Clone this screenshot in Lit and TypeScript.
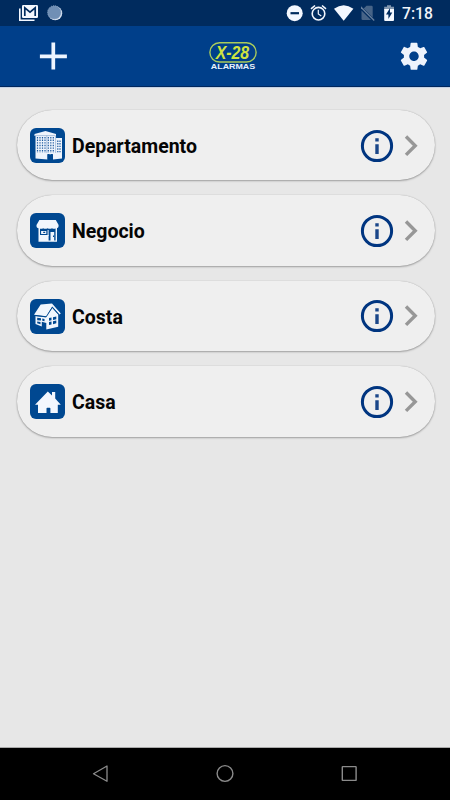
import { LitElement, html, svg, css } from "lit";
import { customElement } from "lit/decorators.js";

const white = "#f4f8ff";

// Pictures for the 35x35 place badges
const pictures: Record<string, unknown> = {
  Departamento: svg`
    <path fill="#eef4fc" d="M4.5 6L15.5 3L26 6V10H32V30.5L23 31.5V26.5H17.5V31.5L5.5 30.5V8H4.5Z"/>
    <path stroke="#1d5a9f" stroke-width="1.2" stroke-dasharray="1.4 1.2" d="M7.5 9V24.7M10 9V24.7M12.5 9V24.7M15 9V24.7M18.3 9V24.7M20.8 9V24.7M23.3 9V24.7M27.8 12.5V24.7M30 12.5V24.7"/>
    <path stroke="#7f9fc8" stroke-width=".6" d="M16.8 7.5V25M25.6 8V25M5 7.6H25.5"/>
    <path fill="#004891" d="M17.5 26H19.6V31.7H17.5ZM20.6 26H22.8V31.7H20.6Z"/>`,
  Negocio: svg`
    <path fill="#f1f6fd" d="M9.4 7H25.8L28.6 12Q28.8 15.2 26.2 15.2Q24 16.2 22 15.2Q19.8 16.3 17.6 15.2Q15.2 16.3 13.2 15.2Q11 16.3 9 15.2Q6.2 15.2 6.5 12Z"/>
    <path fill="#f1f6fd" d="M8.5 14.5H10V28.8H8.5ZM25.6 14.5H27V28.8H25.6ZM8.5 22H18.6V28.8H8.5ZM8.5 27.6H27V28.8H8.5ZM20.5 19H24.2V28H20.5Z"/>
    <path fill="#f1f6fd" d="M11.1 18H16.3V21H11.1ZM17.6 17H18.6V23H17.6Z"/>
    <path fill="#004891" d="M13.2 18.8H15.2V20H13.2ZM23 22.5H24V24H23Z"/>`,
  Costa: svg`
    <path fill="#f1f6fd" d="M4 15.8L10.7 5.5L22 4.6L30.8 14.5L29.4 15.5L22.3 7.4L16.3 17.2Z"/>
    <path fill="#f1f6fd" d="M5.5 17L15.6 18.3L22.3 9L28.2 15.6V27.7L16.3 30.5V24L11.8 22.8V27.5L5.5 25Z"/>
    <path stroke="#004891" stroke-width=".9" fill="none" d="M5.5 16.6L16.2 17.9L22.3 8.3L28.6 15.3"/>
    <path fill="#004891" d="M7.2 18.8L11 19.3V21.6L7.2 21.2ZM7.2 22.4L10.5 22.9V25.2L7.2 24.3ZM12.3 19.6L14.5 20V22.2L12.3 21.8ZM19 19L21.5 18.5V21.2L19 21.7ZM19 23L21.5 22.6V25.4L19 26ZM23 18.2L26.3 17.5V20.2L23 20.9ZM23 22.3L26.3 21.5V24.3L23 25.2Z"/>`,
  Casa: svg`<path fill="#f3f7fe" d="M17.8 7.6L22 11.6V8H25.2V14.6L30.8 20.7H27.8V29H20.4V24.5Q20.4 23.8 19.7 23.8H17.2Q16.5 23.8 16.5 24.5V29H8V20.7H5Z"/>`,
};

@customElement("place-row")
class PlaceRow extends LitElement {
  static properties = { name: { type: String } };
  declare name: string;

  static styles = css`
    :host { display: block; }
    .row {
      box-sizing: border-box; height: 70.6px; border-radius: 35px;
      background: #efefef; display: flex; align-items: center;
      padding: 1px 17px 0 13px;
      box-shadow: 0 1px 2px rgba(0,0,0,.3), 0 0 1px rgba(0,0,0,.26);
    }
    .badge { width: 35px; height: 35px; flex: none; display: block; }
    .name {
      flex: 1; margin-left: 7px; color: #050505; padding-top: 3px;
      font: 700 19.5px/24px Roboto, "Liberation Sans", sans-serif;
    }
    .info { width: 34px; height: 34px; display: block; }
    .arrow { width: 14px; height: 24px; display: block; margin-left: 10px; }
  `;

  render() {
    return html`<div class="row">
      <svg class="badge" viewBox="0 0 35 35" fill="none">
        <rect width="35" height="35" rx="6" fill="#004891"/>
        ${pictures[this.name]}
      </svg>
      <span class="name">${this.name}</span>
      <svg class="info" viewBox="0 0 34 34">
        <circle cx="17" cy="17" r="14.6" fill="none" stroke="#003580" stroke-width="3"/>
        <path fill="#1a4689" d="M15.3 9.3H18.7V12.4H15.3ZM15.3 15.2H18.7V25H15.3Z"/>
      </svg>
      <svg class="arrow" viewBox="0 0 14 24">
        <path fill="none" stroke="#979797" stroke-width="3.4" d="M2 2.5L11.2 11.7L2 20.9"/>
      </svg>
    </div>`;
  }
}

@customElement("app-root")
class AppRoot extends LitElement {
  static styles = css`
    :host {
      display: flex; flex-direction: column; width: 450px; height: 800px;
      background: #e7e7e7; overflow: hidden;
      font-family: Roboto, "Liberation Sans", sans-serif;
    }
    svg { display: block; flex: none; }
    .status {
      height: 26px; flex: none; background: #002b5e; display: flex;
      align-items: center; padding: 0 17px 0 18px; box-sizing: border-box;
    }
    .notices { display: flex; gap: 8px; flex: 1; }
    .system { display: flex; align-items: center; gap: 7px; }
    .clock { color: #f2f5fa; font-size: 15.7px; font-weight: 500; line-height: 26px; padding-top: 2px; width: 31px; white-space: nowrap; }
    .bar {
      height: 61px; flex: none; box-sizing: border-box; background: #003f8a;
      border-bottom: 1px solid #00275d; box-shadow: 0 1px 0 #c5d2e5;
      display: grid; grid-template-columns: 28px 1fr 28px; align-items: center;
      padding: 0 22px 0 39px;
    }
    .logo { justify-self: center; margin: 1px 1.5px 0 0; }
    .list {
      flex: 1; display: flex; flex-direction: column; gap: 14.8px;
      padding: 22.8px 15px 0 17px;
    }
    .nav {
      height: 52px; flex: none; background: #000; display: flex;
      justify-content: space-between; align-items: center;
      padding: 0 91px; box-shadow: 0 -1px 0 #a9a9a9;
    }
    .mark { font: italic 700 17.5px "Liberation Sans", sans-serif; }
    .word { font: 700 7px "Liberation Sans", sans-serif; }
  `;

  render() {
    return html`
      <div class="status">
        <div class="notices">
          <svg width="21" height="18" viewBox="18 4 21 18" fill="none">
            <path stroke="${white}" stroke-width="1.6" d="M19.8 8.5V20.2H34.5"/>
            <rect x="22" y="5" width="16" height="13" rx="1.2" fill="${white}"/>
            <path stroke="#002b5e" stroke-width="1.7" d="M24.8 16V7.8L30 12.2L35.2 7.8V16"/>
          </svg>
          <svg width="16" height="18" viewBox="47 4 16 18">
            <circle cx="55.2" cy="13.2" r="7" fill="#dce6f3"/>
            <circle cx="54.3" cy="12.4" r="6.7" fill="#708fb5" stroke="#8da6c5" stroke-dasharray="1 1"/>
          </svg>
        </div>
        <div class="system">
          <svg width="17" height="18" viewBox="286 4 17 18">
            <circle cx="294.7" cy="13.2" r="8" fill="${white}"/>
            <path fill="#002b5e" d="M290.5 12.1H299V14.3H290.5Z"/>
          </svg>
          <svg width="17" height="18" viewBox="310 4 17 18" fill="none" stroke="${white}">
            <circle cx="318.5" cy="13.7" r="6.3" stroke-width="1.6"/>
            <path stroke-width="1.6" d="M311 8.8L315 5.5M322 5.5L326 8.8"/>
            <path stroke-width="1.2" d="M318.3 9.8V14L321.3 16"/>
          </svg>
          <svg width="20" height="18" viewBox="334 4 20 18">
            <path fill="${white}" d="M334 8.7Q343.7 1.6 353.4 8.7L343.7 20.7Z"/>
          </svg>
          <svg width="16" height="18" viewBox="361.5 4 16 18">
            <path fill="#476487" d="M367 5.7H372Q373.2 5.7 373.2 7V17.5L364.2 8.5ZM362 10.4L371.5 20H363.3Q362 20 362 18.7Z"/>
            <path stroke="#68809e" stroke-width="1.3" d="M361 6.7L374.7 20.5"/>
          </svg>
          <svg width="11" height="18" viewBox="384 4 11 18">
            <path fill="#8297af" d="M387 5.2H391V6.8H394V10H384.2V6.8H387Z"/>
            <path fill="${white}" d="M384.2 9H394V20Q394 21 393 21H385.2Q384.2 21 384.2 20Z"/>
            <path fill="#002b5e" d="M390 8L386 14.4H388.4V19L392.3 12.5H390Z"/>
          </svg>
          <span class="clock">7:18</span>
        </div>
      </div>
      <div class="bar">
        <svg width="28" height="28" viewBox="0 0 28 28">
          <path stroke="#eef5ff" stroke-width="3.7" d="M14.3 .6V27.6M.9 14.4H27.9"/>
        </svg>
        <svg class="logo" width="50" height="32" viewBox="208 42 50 32">
          <rect x="209.9" y="43.7" width="46.2" height="19.3" rx="9.6" fill="none" stroke="#a9cc5c" stroke-width="1.4"/>
          <text class="mark" x="215.7" y="59.6" textLength="33.5" lengthAdjust="spacingAndGlyphs" fill="#cfe340">X-28</text>
          <text class="word" x="210.8" y="70.3" textLength="44.4" lengthAdjust="spacingAndGlyphs" fill="#e9f2fc">ALARMAS</text>
        </svg>
        <svg width="28" height="28" viewBox="0 0 28 28">
          <g transform="translate(-2.2 -1.9) scale(1.35)">
            <path fill="#eef3fc" d="M19.43 12.98c.04-.32.07-.64.07-.98s-.03-.66-.07-.98l2.11-1.65c.19-.15.24-.42.12-.64l-2-3.46c-.12-.22-.39-.3-.61-.22l-2.49 1c-.52-.4-1.08-.73-1.69-.98l-.38-2.65C14.46 2.18 14.25 2 14 2h-4c-.25 0-.46.18-.49.42l-.38 2.65c-.61.25-1.17.59-1.69.98l-2.49-1c-.23-.09-.49 0-.61.22l-2 3.46c-.13.22-.07.49.12.64l2.11 1.65c-.04.32-.07.65-.07.98s.03.66.07.98l-2.11 1.65c-.19.15-.24.42-.12.64l2 3.46c.12.22.39.3.61.22l2.49-1c.52.4 1.08.73 1.69.98l.38 2.65c.03.24.24.42.49.42h4c.25 0 .46-.18.49-.42l.38-2.65c.61-.25 1.17-.59 1.69-.98l2.49 1c.23.09.49 0 .61-.22l2-3.46c.12-.22.07-.49-.12-.64l-2.11-1.65zM12 15.5c-1.93 0-3.5-1.57-3.5-3.5s1.57-3.5 3.5-3.5 3.5 1.57 3.5 3.5-1.57 3.5-3.5 3.5z"/>
          </g>
        </svg>
      </div>
      <div class="list">
        ${Object.keys(pictures).map((n) => html`<place-row .name=${n}></place-row>`)}
      </div>
      <div class="nav">
        <svg width="18" height="20" viewBox="0 0 18 20"><path fill="none" stroke="#8b8b8b" stroke-width="1.3" stroke-linejoin="round" d="M2.5 9.7L16 2V17.3Z"/></svg>
        <svg width="18" height="20" viewBox="0 0 18 20"><circle cx="9" cy="9.5" r="7.9" fill="none" stroke="#8b8b8b" stroke-width="1.4"/></svg>
        <svg width="18" height="20" viewBox="0 0 18 20"><rect x="1.3" y="2.6" width="13.8" height="13.8" rx=".5" fill="none" stroke="#8b8b8b" stroke-width="1.4"/></svg>
      </div>`;
  }
}
